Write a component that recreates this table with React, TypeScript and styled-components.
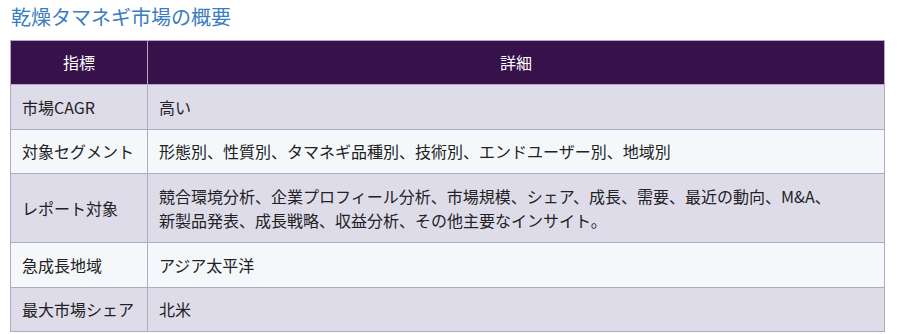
import * as React from 'react';
import styled, { createGlobalStyle } from 'styled-components';

type Row = {
    label: string,
    detail: string[],
}

const rows: Row[] = [
    { label: '市場CAGR', detail: ['高い'] },
    { label: '対象セグメント', detail: ['形態別、性質別、タマネギ品種別、技術別、エンドユーザー別、地域別'] },
    {
        label: 'レポート対象',
        detail: [
            '競合環境分析、企業プロフィール分析、市場規模、シェア、成長、需要、最近の動向、M&A、',
            '新製品発表、成長戦略、収益分析、その他主要なインサイト。',
        ],
    },
    { label: '急成長地域', detail: ['アジア太平洋'] },
    { label: '最大市場シェア', detail: ['北米'] },
];

const GlobalStyle = createGlobalStyle`
  body {
    margin: 0;
    background: #ffffff;
    font-family: "Noto Sans CJK JP", "Noto Sans", sans-serif;
    color: #222222;
  }
`;

const App: React.FC = () => {
    return (
        <Page>
            <GlobalStyle />
            <Title>乾燥タマネギ市場の概要</Title>
            <Table>
                <colgroup>
                    <col style={{ width: 137 }} />
                    <col />
                </colgroup>
                <thead>
                    <tr>
                        <HeadCell>指標</HeadCell>
                        <HeadCell>詳細</HeadCell>
                    </tr>
                </thead>
                <tbody>
                    {rows.map((row, i) => (
                        <BodyRow key={row.label} $striped={i % 2 === 1}>
                            <Cell>{row.label}</Cell>
                            <Cell>
                                {row.detail.map((line, j) => (
                                    <Line key={j}>{line}</Line>
                                ))}
                            </Cell>
                        </BodyRow>
                    ))}
                </tbody>
            </Table>
        </Page>
    )
}

const Page = styled.main`
  display: flex;
  flex-direction: column;
  padding: 3px 13px 0 10px;
  width: 898px;
  box-sizing: border-box;
`;

const Title = styled.h2`
  margin: 0 0 9px 1px;
  font-size: 20px;
  line-height: 28px;
  font-weight: 400;
  color: #3a7dc0;
`;

const Table = styled.table`
  width: 875px;
  border-collapse: collapse;
  table-layout: fixed;
  font-size: 16px;
  line-height: 1.53;
`;

const HeadCell = styled.th`
  background: #37114a;
  color: #ffffff;
  font-weight: 400;
  text-align: center;
  padding: 9px 10px 10px;
  border: 1px solid #b6a5cf;
`;

const BodyRow = styled.tr<{ $striped: boolean }>`
  background: ${({ $striped }) => ($striped ? '#f4f8fb' : '#dfdcea')};
`;

const Cell = styled.td`
  padding: 9.5px 10px 9.5px 11px;
  border: 1px solid #aeabc3;
  vertical-align: middle;
  white-space: nowrap;
`;

const Line = styled.div`
  display: block;
`;

export default App;
